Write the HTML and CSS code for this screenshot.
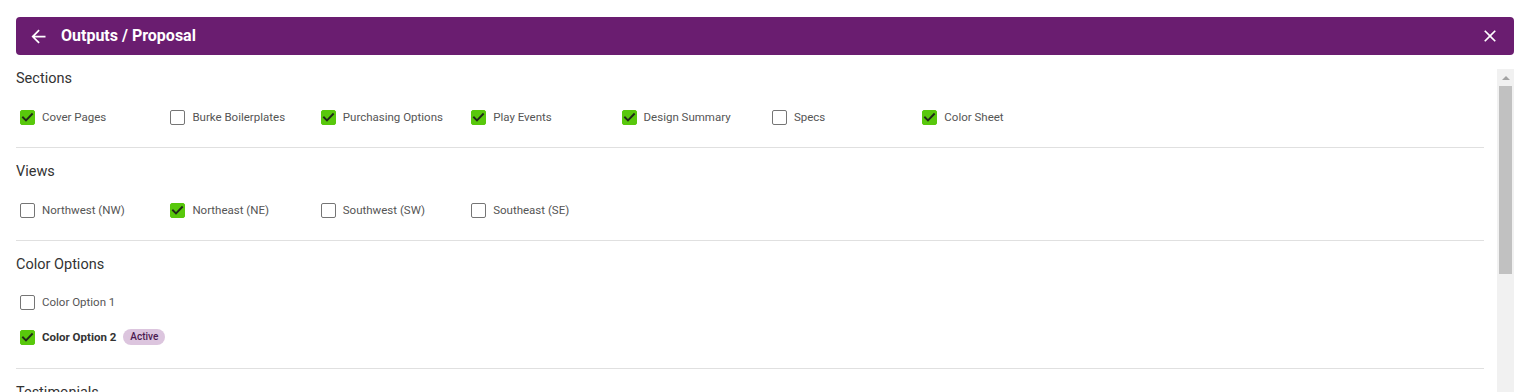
FILE: index.html
```html
<!DOCTYPE html>
<html lang="en">
<head>
<meta charset="utf-8">
<title>Outputs / Proposal</title>
<link rel="stylesheet" href="styles.css">
</head>
<body>
<div class="page">
  <header class="topbar">
    <button class="icon-btn back" aria-label="Back">
      <svg viewBox="0 0 24 24" width="21" height="21"><path fill="#fff" d="M20 11H7.83l5.59-5.59L12 4l-8 8 8 8 1.41-1.41L7.83 13H20v-2z"/></svg>
    </button>
    <h1 class="title">Outputs / Proposal</h1>
    <button class="icon-btn close" aria-label="Close">
      <svg viewBox="0 0 24 24" width="20" height="20"><path fill="#fff" d="M19 6.41L17.59 5 12 10.59 6.41 5 5 6.41 10.59 12 5 17.59 6.41 19 12 13.41 17.59 19 19 17.59 13.41 12z"/></svg>
    </button>
  </header>

  <div class="body-area">
    <main class="content">
      <section class="section">
        <h2 class="section-title">Sections</h2>
        <div class="grid">
          <label class="item"><span class="box checked"><svg viewBox="0 0 15 15"><polyline points="3,7.4 6,10.4 12,4.2"/></svg></span><span class="label">Cover Pages</span></label>
          <label class="item"><span class="box"></span><span class="label">Burke Boilerplates</span></label>
          <label class="item"><span class="box checked"><svg viewBox="0 0 15 15"><polyline points="3,7.4 6,10.4 12,4.2"/></svg></span><span class="label">Purchasing Options</span></label>
          <label class="item"><span class="box checked"><svg viewBox="0 0 15 15"><polyline points="3,7.4 6,10.4 12,4.2"/></svg></span><span class="label">Play Events</span></label>
          <label class="item"><span class="box checked"><svg viewBox="0 0 15 15"><polyline points="3,7.4 6,10.4 12,4.2"/></svg></span><span class="label">Design Summary</span></label>
          <label class="item"><span class="box"></span><span class="label">Specs</span></label>
          <label class="item"><span class="box checked"><svg viewBox="0 0 15 15"><polyline points="3,7.4 6,10.4 12,4.2"/></svg></span><span class="label">Color Sheet</span></label>
        </div>
      </section>

      <section class="section">
        <h2 class="section-title">Views</h2>
        <div class="grid">
          <label class="item"><span class="box"></span><span class="label">Northwest (NW)</span></label>
          <label class="item"><span class="box checked"><svg viewBox="0 0 15 15"><polyline points="3,7.4 6,10.4 12,4.2"/></svg></span><span class="label">Northeast (NE)</span></label>
          <label class="item"><span class="box"></span><span class="label">Southwest (SW)</span></label>
          <label class="item"><span class="box"></span><span class="label">Southeast (SE)</span></label>
        </div>
      </section>

      <section class="section tall">
        <h2 class="section-title">Color Options</h2>
        <div class="stack">
          <label class="item"><span class="box"></span><span class="label">Color Option 1</span></label>
          <label class="item"><span class="box checked"><svg viewBox="0 0 15 15"><polyline points="3,7.4 6,10.4 12,4.2"/></svg></span><span class="label strong">Color Option 2</span><span class="badge">Active</span></label>
        </div>
      </section>

      <section class="section last">
        <h2 class="section-title">Testimonials</h2>
      </section>
    </main>

    <div class="scrollbar" aria-hidden="true">
      <div class="sb-btn"><span class="tri"></span></div>
      <div class="sb-thumb"></div>
    </div>
  </div>
</div>
</body>
</html>
```

FILE: styles.css
```css
* { box-sizing: border-box; }

html, body {
  margin: 0;
  padding: 0;
  height: 100%;
  overflow: hidden;
  background: #fff;
  font-family: Roboto, "Liberation Sans", Arial, sans-serif;
}

.page {
  padding: 17px 13px 0 16px;
  height: 100%;
  display: flex;
  flex-direction: column;
}

.topbar {
  height: 38px;
  flex: none;
  background: #6a1d70;
  border-radius: 4px;
  display: flex;
  align-items: center;
  padding: 0 14px 0 12px;
}

.icon-btn {
  background: none;
  border: 0;
  padding: 0;
  margin: 0;
  display: flex;
  align-items: center;
  justify-content: center;
  cursor: pointer;
}

.back { width: 21px; height: 21px; }
.close { width: 20px; height: 20px; margin-left: auto; }

.title {
  margin: 0 0 0 12px;
  color: #fff;
  font-size: 16px;
  font-weight: 700;
  line-height: 18px;
}

.body-area {
  flex: 1;
  display: flex;
  margin-top: 14px;
  min-height: 0;
}

.content {
  flex: 1;
  padding-right: 13px;
}

.section {
  border-bottom: 1px solid #e0e0e0;
  padding-bottom: 18px;
  padding-top: 14px;
}
.section:first-child { padding-top: 0; }
.section.tall { padding-bottom: 19px; }
.section.last { border-bottom: 0; padding-top: 14px; }

.section-title {
  margin: 0;
  padding-top: 2px;
  font-size: 14.5px;
  font-weight: 400;
  line-height: 16px;
  color: #333;
}

.grid {
  margin-top: 18px;
  display: grid;
  grid-template-columns: repeat(7, 150.4px);
}

.stack {
  margin-top: 17px;
  display: flex;
  flex-direction: column;
  gap: 11px;
}

.item {
  height: 24px;
  display: flex;
  align-items: center;
  padding-left: 4px;
}

.box {
  width: 15px;
  height: 15px;
  flex: none;
  border: 1px solid #757575;
  border-radius: 2px;
  background: #fff;
  display: flex;
  align-items: center;
  justify-content: center;
}

.box.checked {
  background: #58c80c;
  border-color: #58c80c;
}

.box svg {
  width: 15px;
  height: 15px;
  flex: none;
}

.box polyline {
  fill: none;
  stroke: #1f2a18;
  stroke-width: 1.9;
  stroke-linecap: square;
}

.label {
  margin-left: 7px;
  font-size: 11.5px;
  color: #555;
  white-space: nowrap;
}

.label.strong {
  font-weight: 700;
  color: #333;
}

.badge {
  margin-left: 7px;
  background: #dcc5de;
  color: #4b1a50;
  font-size: 10px;
  font-weight: 500;
  line-height: 16px;
  height: 16px;
  padding: 0 7px;
  border-radius: 8px;
}

.scrollbar {
  width: 17px;
  flex: none;
  background: #f1f1f1;
  display: flex;
  flex-direction: column;
  align-items: center;
}

.sb-btn {
  height: 17px;
  width: 17px;
  display: flex;
  align-items: center;
  justify-content: center;
}

.tri {
  width: 0;
  height: 0;
  border-left: 4px solid transparent;
  border-right: 4px solid transparent;
  border-bottom: 4px solid #a3a3a3;
}

.sb-thumb {
  width: 13px;
  height: 188px;
  background: #c1c1c1;
}
```
